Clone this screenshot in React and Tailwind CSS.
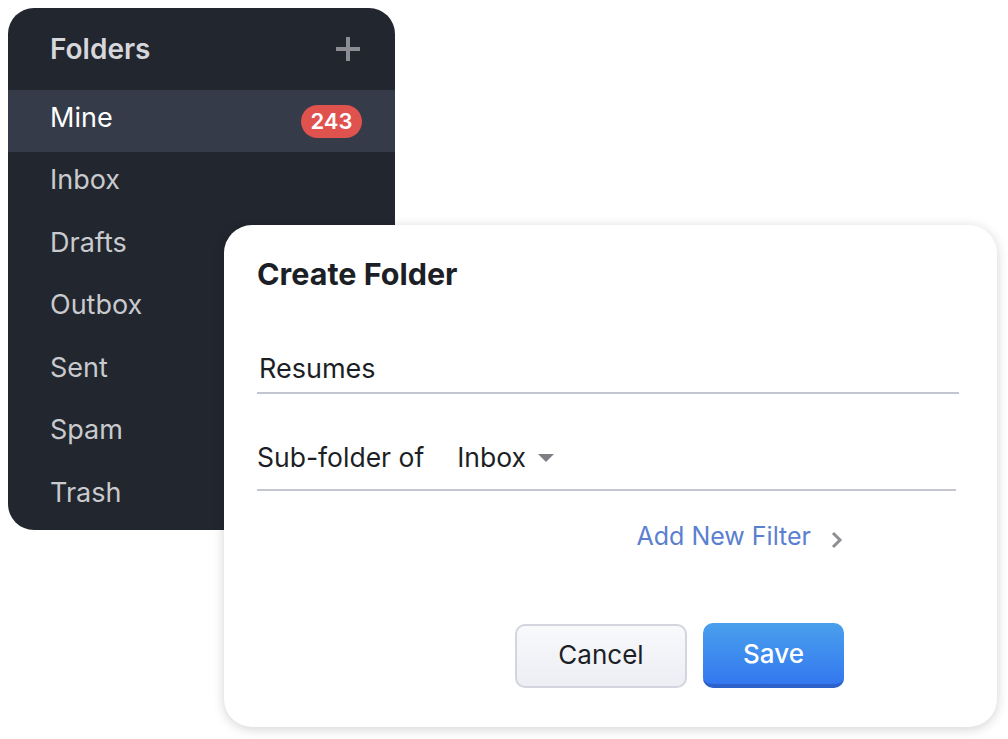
import React from "react";

const items = ["Inbox", "Drafts", "Outbox", "Sent", "Spam", "Trash"];

export default function App() {
  return (
    <div
      className="relative w-[1008px] h-[739px] bg-white overflow-hidden"
      style={{ fontFamily: "Inter, 'Noto Sans', sans-serif" }}
    >
      {/* Sidebar */}
      <div className="absolute left-[8px] top-[8px] w-[387px] h-[522px] rounded-[26px] bg-[#22262f] flex flex-col overflow-hidden">
        <div className="h-[82px] flex items-center justify-between pl-[42px] pr-[34px]">
          <span className="text-[28px] font-semibold text-[#d6d7da]">Folders</span>
          <svg width="26" height="26" viewBox="0 0 26 26">
            <path d="M13 1v24M1 13h24" stroke="#8b8d92" strokeWidth="4" />
          </svg>
        </div>
        <div className="h-[62px] bg-[#353b48] flex items-center justify-between pl-[42px] pr-[33px]">
          <span className="text-[27px] text-white pb-[6px]">Mine</span>
          <span className="h-[33px] w-[61px] rounded-full bg-[#e0524e] text-white text-[22px] font-semibold flex items-center justify-center">
            243
          </span>
        </div>
        {items.map((t) => (
          <div key={t} className="h-[62.5px] flex items-center pl-[42px] pb-[6px]">
            <span className="text-[27px] text-[#c9cacd]">{t}</span>
          </div>
        ))}
      </div>

      {/* Dialog */}
      <div className="absolute left-[224px] top-[225px] w-[773px] h-[502px] rounded-[28px] bg-white shadow-[0_2px_12px_rgba(0,0,0,0.18)] flex flex-col pl-[33px]">
        <div className="pt-[26px] h-[96px]">
          <span className="text-[30.5px] font-bold text-[#1c1f26]">Create Folder</span>
        </div>
        <div className="w-[702px] h-[73px] border-b-2 border-[#c3c6d1] flex items-end pb-[3px] pl-[2px]">
          <span className="text-[27px] text-[#1c1f26]">Resumes</span>
        </div>
        <div className="w-[699px] h-[97px] border-b-2 border-[#c3c6d1] flex items-end pb-[11px]">
          <span className="text-[26.5px] text-[#1c1f26]">Sub-folder of</span>
          <span className="text-[26.5px] text-[#1c1f26] ml-[33px]">Inbox</span>
          <svg width="16" height="8" viewBox="0 0 16 8" className="ml-[12px] mb-[16px]">
            <path d="M0 0h16L8 8z" fill="#7d7f85" />
          </svg>
        </div>
        <div className="h-[94px] flex items-center justify-end pr-[153px] pb-[2px]">
          <span className="text-[25px] text-[#5b80cf]">Add New Filter</span>
          <svg width="14" height="18" viewBox="0 0 14 18" className="ml-[19px] mt-[6px]">
            <path d="M3 2l7 7-7 7" stroke="#8e8f93" strokeWidth="3" fill="none" />
          </svg>
        </div>
        <div className="flex items-start pl-[258px] gap-[16px] pt-[39px]">
          <button className="w-[172px] h-[64px] rounded-[10px] border-2 border-[#d2d5de] bg-gradient-to-b from-[#f8f9fb] to-[#eceef4] text-[26px] text-[#1c1f26] pb-[3px]">
            Cancel
          </button>
          <button className="w-[141px] h-[65px] -mt-[1px] rounded-[10px] border-b-4 border-[#2c62c9] bg-gradient-to-b from-[#4a9fec] to-[#3478f0] text-[26px] text-white font-medium">
            Save
          </button>
        </div>
      </div>
    </div>
  );
}
